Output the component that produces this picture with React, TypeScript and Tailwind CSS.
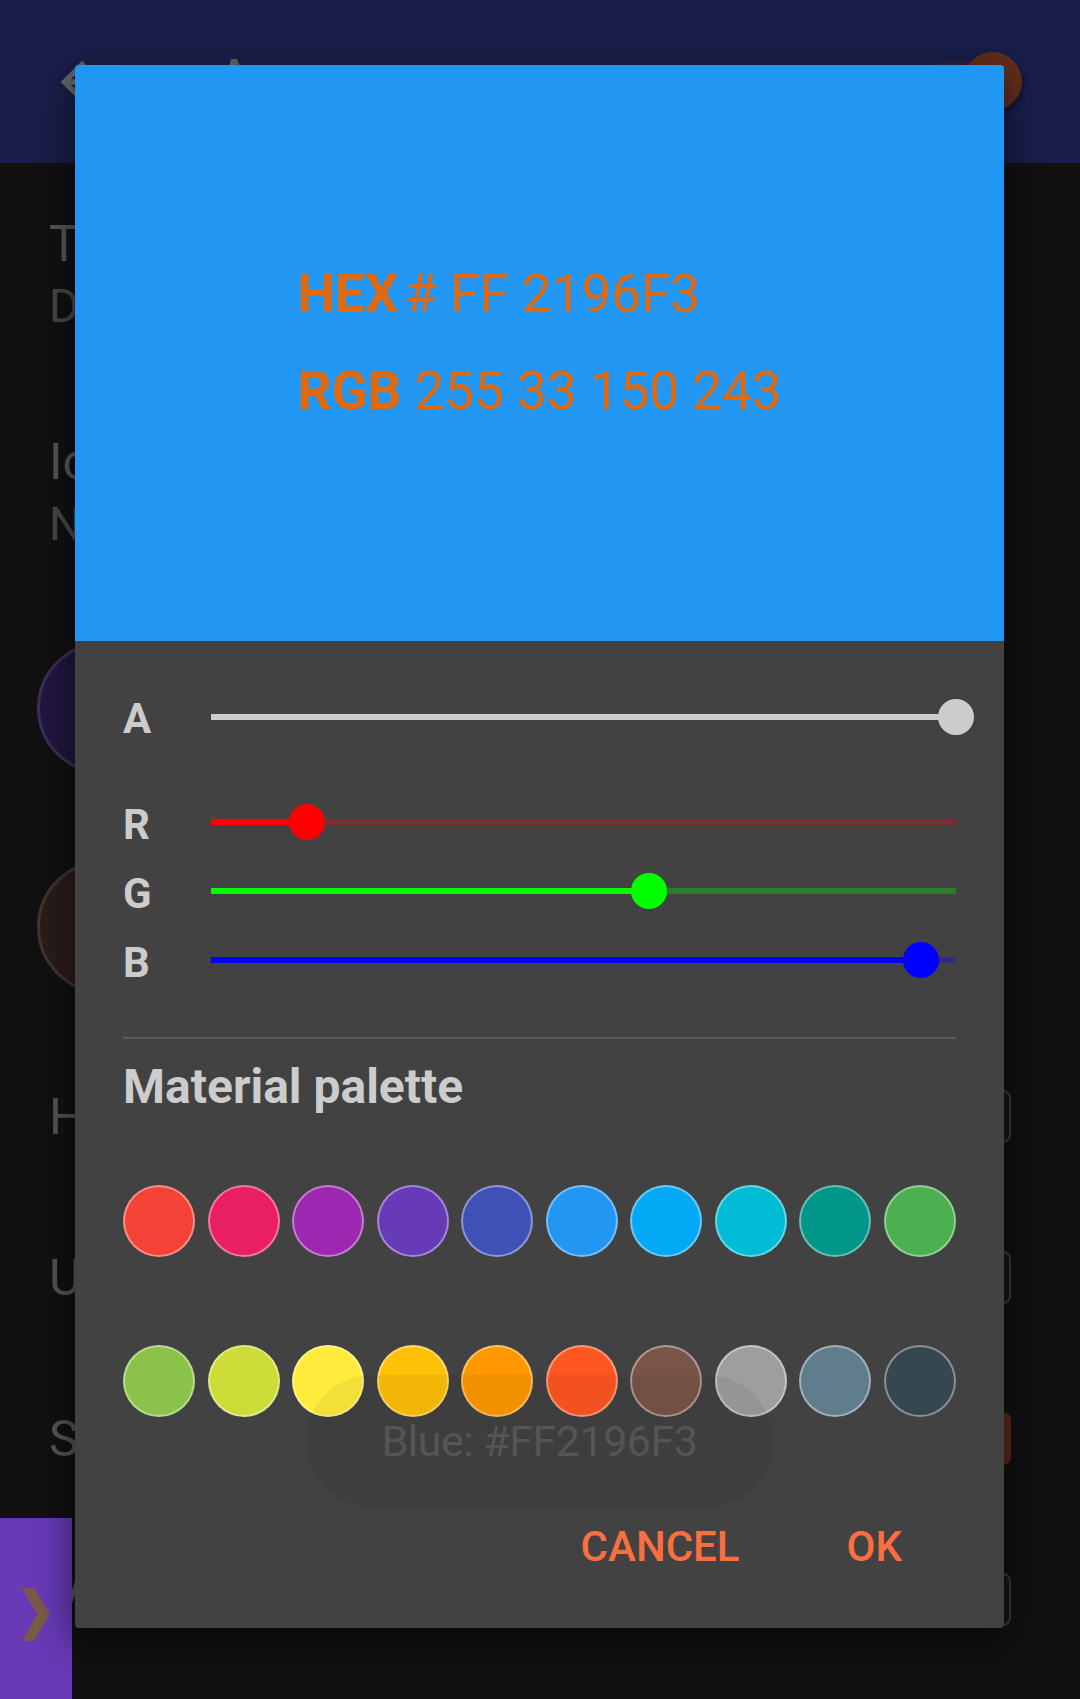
import React from 'react';

// Material palette swatches, two rows of ten
const paletteTop = [
  'bg-[#F44336]',
  'bg-[#E91E63]',
  'bg-[#9C27B0]',
  'bg-[#673AB7]',
  'bg-[#3F51B5]',
  'bg-[#2196F3]',
  'bg-[#03A9F4]',
  'bg-[#00BCD4]',
  'bg-[#009688]',
  'bg-[#4CAF50]',
];
const paletteBottom = [
  'bg-[#8BC34A]',
  'bg-[#CDDC39]',
  'bg-[#FFEB3B]',
  'bg-[#FFC107]',
  'bg-[#FF9800]',
  'bg-[#FF5722]',
  'bg-[#795548]',
  'bg-[#9E9E9E]',
  'bg-[#607D8B]',
  'bg-[#37474F]',
];

type Channel = {
  label: string;
  value: number;
  fill: string;
  rest: string;
};

const channels: Channel[] = [
  { label: 'R', value: 33, fill: 'bg-[#ff0000]', rest: 'bg-[#ff0000]/30' },
  { label: 'G', value: 150, fill: 'bg-[#00ff00]', rest: 'bg-[#00ff00]/30' },
  { label: 'B', value: 243, fill: 'bg-[#0000ff]', rest: 'bg-[#0000ff]/30' },
];

function ChannelSlider({ label, value, fill, rest }: Channel) {
  const pct = (value / 255) * 100;
  return (
    <div className="flex h-[69px] items-center">
      <span className="w-[88px] translate-y-[3px] text-[42px] font-bold leading-none text-[#cccccc]">{label}</span>
      <div className={`relative h-[6px] flex-1 ${rest}`}>
        <div className={`absolute left-0 top-0 h-full ${fill}`} style={{ width: `${pct}%` }} />
        <div
          className={`absolute top-1/2 h-[36px] w-[36px] -translate-x-1/2 -translate-y-1/2 rounded-full ${fill}`}
          style={{ left: `${pct}%` }}
        />
      </div>
    </div>
  );
}

function SwatchRow({ colors }: { colors: string[] }) {
  return (
    <div className="flex justify-between">
      {colors.map((c) => (
        <div key={c} className={`h-[72px] w-[72px] rounded-full border-2 border-white/40 ${c}`} />
      ))}
    </div>
  );
}

// rows of the settings screen, mostly hidden under the dialog
function BackgroundRow({ letter, control }: { letter: string; control: string }) {
  return (
    <div className="flex h-[161px] items-center justify-between pl-[49px] pr-[69px]">
      <span className="text-[50px] leading-[58px] text-[#555555]">{letter}</span>
      <div className={`h-[53px] w-[70px] rounded-[8px] ${control}`} />
    </div>
  );
}

export default function App() {
  return (
    <div className="relative h-[1699px] w-[1080px] overflow-hidden bg-[#111111] [font-family:Roboto,sans-serif]">
      {/* App bar (dimmed by the dialog scrim) */}
      <div className="flex h-[163px] items-center bg-[#191f4a] pl-[50px] pr-[58px]">
        <svg viewBox="0 0 24 24" className="h-[64px] w-[64px] fill-[#666666]">
          <path d="M20 11H7.83l5.59-5.59L12 4l-8 8 8 8 1.41-1.41L7.83 13H20v-2z" />
        </svg>
        <span className="ml-[103px] -mt-[6px] flex-1 text-[52px] font-medium leading-[60px] text-[#666666]">A</span>
        <div className="relative flex items-center">
          <div className="-mr-[30px] h-[44px] w-[66px] rounded-full bg-[#2a2247]" />
          <div className="h-[59px] w-[59px] rounded-full bg-[#622e1b] shadow-[0_3px_6px_rgba(0,0,0,0.5)]" />
        </div>
      </div>

      {/* Settings list behind the dialog */}
      <div className="pl-[49px] pt-[52px]">
        <div className="text-[50px] leading-[58px] text-[#575757]">T</div>
        <div className="mt-[4px] text-[46px] leading-[58px] text-[#474747]">D</div>
        <div className="mt-[98px] text-[50px] leading-[58px] text-[#575757]">Ic</div>
        <div className="mt-[4px] text-[46px] leading-[58px] text-[#474747]">N</div>
      </div>
      <div className="ml-[37px] mt-[89px] h-[132px] w-[132px] rounded-full border-[3px] border-[#3a2f59] bg-[#22163f]" />
      <div className="ml-[37px] mt-[86px] h-[134px] w-[134px] rounded-full border-[3px] border-[#3d3633] bg-[#2a1d1a]" />
      <div className="mt-[42px]">
        <BackgroundRow letter="H" control="border-2 border-[#3c3c3c] bg-[#161616]" />
        <BackgroundRow letter="U" control="border-2 border-[#3c3c3c] bg-[#161616]" />
        <BackgroundRow letter="S" control="bg-[#5b2a19]" />
        <BackgroundRow letter="V" control="border-2 border-[#3c3c3c] bg-[#161616]" />
      </div>

      {/* Floating side tab */}
      <div className="absolute bottom-0 left-0 h-[181px] w-[72px] bg-[#673AB7]">
        <svg viewBox="0 0 72 181" className="h-full w-full fill-[#7b5a4a]">
          <polygon points="22,70 34,70 50,96 34,123 22,123 37,96" />
        </svg>
      </div>

      {/* Color picker dialog */}
      <div className="absolute left-[75px] top-[65px] w-[929px] overflow-hidden rounded-[4px] bg-[#424242] shadow-[0_12px_40px_rgba(0,0,0,0.6)]">
        <div className="flex h-[576px] justify-center bg-[#2196F3] pt-[181px]">
          <div className="text-[53px] leading-[97px] text-[#e06a10]">
            <div>
              <span className="font-bold">HEX</span>
              <span className="ml-[6px]">#</span> FF 2196F3
            </div>
            <div>
              <span className="font-bold">RGB</span> 255 33 150 243
            </div>
          </div>
        </div>

        <div className="px-[48px] pb-[56px] pt-[41px]">
          {/* Alpha */}
          <div className="flex h-[69px] items-center">
            <span className="w-[88px] translate-y-[2px] text-[42px] font-bold leading-none text-[#cccccc]">A</span>
            <div className="relative h-[6px] flex-1 bg-[#cccccc]">
              <div className="absolute left-full top-1/2 h-[36px] w-[36px] -translate-x-1/2 -translate-y-1/2 rounded-full bg-[#cccccc]" />
            </div>
          </div>

          <div className="mt-[36px]">
            {channels.map((ch) => (
              <ChannelSlider key={ch.label} {...ch} />
            ))}
          </div>

          <div className="mt-[43px] h-[2px] bg-[#5a5a5a]" />

          <div className="mt-[21px] text-[48px] font-bold leading-[54px] text-[#cccccc]">Material palette</div>

          <div className="mt-[71px]">
            <SwatchRow colors={paletteTop} />
          </div>
          <div className="mt-[88px]">
            <SwatchRow colors={paletteBottom} />
          </div>

          <div className="mt-[105px] flex justify-end gap-[107px] pr-[54px] text-[42px] font-medium leading-[50px] text-[#fa6e40]">
            <span>CANCEL</span>
            <span>OK</span>
          </div>
        </div>
      </div>

      {/* Toast over the dialog */}
      <div className="absolute left-[306px] top-[1375px] flex h-[132px] w-[467px] items-center justify-center rounded-full bg-black/[0.05]">
        <span className="text-[43px] tracking-[-0.5px] text-[#555555]">Blue: #FF2196F3</span>
      </div>
    </div>
  );
}
